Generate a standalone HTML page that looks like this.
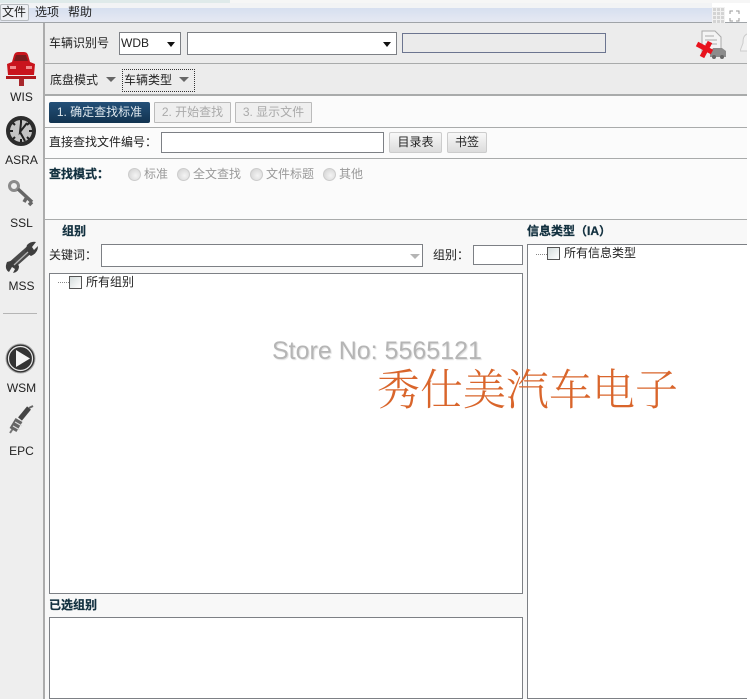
<!DOCTYPE html>
<html lang="zh">
<head>
<meta charset="utf-8">
<style>
html,body{margin:0;padding:0;background:#fff}
#p{position:relative;width:750px;height:699px;overflow:hidden;background:#fff;font-family:"Liberation Sans","Noto Sans CJK SC",sans-serif;font-size:12px;color:#222}
#p div,#p span.a,#p svg{position:absolute}
.t{position:absolute;white-space:nowrap;line-height:14px}
.b{font-weight:bold;color:#12303f;-webkit-text-stroke:.25px #12303f}
.box{background:#fff;border:1px solid #7d8085;box-sizing:border-box}
.l{background:#a9abab;height:1px;left:45px;width:702px}
.btn{box-sizing:border-box;text-align:center;border:1px solid #bbb;background:#efefef;color:#aaa;height:21px;line-height:19px;border-radius:1px}
.btn2{box-sizing:border-box;text-align:center;border:1px solid #ccc;background:linear-gradient(#f8f8f8,#dcdcdc);color:#222;height:21px;line-height:19px;border-radius:2px}
.r{width:11px;height:11px;border-radius:50%;background:radial-gradient(circle at 60% 60%,#f4f4f4,#cfcfcf);border:1px solid #ccc}
.g{color:#999}
.side{font-size:12px;color:#222;text-align:center;width:43px;left:0}
.arrow{width:0;height:0;border-left:4px solid transparent;border-right:4px solid transparent;border-top:5px solid #111}
.arrow2{width:0;height:0;border-left:5px solid transparent;border-right:5px solid transparent;border-top:5px solid #666}
.cb{box-sizing:border-box;width:13px;height:13px;border:1px solid #555;background:linear-gradient(135deg,#d5dcdc,#fff)}
.dots{height:1px;border-top:1px dotted #888}
</style>
</head>
<body>
<div id="p">
  <!-- top bars -->
  <div style="left:0;top:0;width:750px;height:3px;background:#f6f6f6"></div>
  <div style="left:0;top:0;width:230px;height:3px;background:#dfeaea"></div>
  <div style="left:0;top:3px;width:712px;height:5px;background:#f2f3f5"></div>
  <div style="left:0;top:8px;width:712px;height:14px;background:linear-gradient(#d6dff0,#e6e9f2)"></div>
  <div style="left:0;top:22px;width:747px;height:1px;background:#a0a4a8"></div>
  <div style="left:0;top:4px;width:29px;height:17px;box-sizing:border-box;border:1px solid #b8bcc0;border-radius:2px;background:#eef0f4"></div>
  <span class="t" style="left:2px;top:5px">文件</span>
  <span class="t" style="left:35px;top:5px">选项</span>
  <span class="t" style="left:68px;top:5px">帮助</span>
  <div style="left:712px;top:7px;width:13px;height:17px;background-color:#d4d4d4;background-image:linear-gradient(#f2f2f2 1px,transparent 1px),linear-gradient(90deg,#f2f2f2 1px,transparent 1px);background-size:4px 4px"></div>
  <svg style="left:729px;top:10px" width="11" height="12" viewBox="0 0 11 12" fill="none" stroke="#999"><path d="M1 4V1H4M7 1H10V4M1 8V11H4M7 11H10V8"/></svg>

  <!-- sidebar -->
  <div style="left:0;top:23px;width:43px;height:676px;background:#eeeeee"></div>
  <div style="left:43px;top:23px;width:2px;height:676px;background:#acacac"></div>

  <!-- rows -->
  <div style="left:45px;top:23px;width:702px;height:71px;background:#ececec"></div>
  <div style="left:45px;top:96px;width:702px;height:123px;background:#fbfbfb"></div>
  <div class="l" style="top:63px"></div>
  <div class="l" style="top:94px;height:2px"></div>
  <div class="l" style="top:127px"></div>
  <div class="l" style="top:158px"></div>
  <div class="l" style="top:219px"></div>
  <div style="left:45px;top:220px;width:702px;height:479px;background:#f8f8f8"></div>

  <!-- row 1 -->
  <span class="t" style="left:49px;top:36px">车辆识别号</span>
  <div class="box" style="left:119px;top:32px;width:62px;height:23px"></div>
  <span class="t" style="left:121px;top:36px">WDB</span>
  <div class="arrow" style="left:167px;top:42px"></div>
  <div class="box" style="left:187px;top:32px;width:210px;height:23px"></div>
  <div class="arrow" style="left:383px;top:42px"></div>
  <div style="left:402px;top:33px;width:204px;height:20px;box-sizing:border-box;border:1px solid #6c7590;background:#ebebeb"></div>
  <svg style="left:695px;top:28px" width="34" height="32" viewBox="0 0 34 32">
    <path d="M7 3H20L26 9V24H7Z" fill="#f4f4f4" stroke="#aaa"/>
    <path d="M10 8H19M10 12H22M10 16H22" stroke="#aaa"/>
    <path d="M15 25L18 20H27L31 23V29H15Z" fill="#8c8c8c"/>
    <circle cx="19" cy="29" r="2" fill="#666"/><circle cx="27" cy="29" r="2" fill="#666"/>
    <path d="M2 16L17 24M15 14L7 29" stroke="#e8121d" stroke-width="5"/>
  </svg>
  <svg style="left:740px;top:32px" width="7" height="24" viewBox="0 0 7 24"><path d="M7 2C3 4 3 8 3 11L0 19H7" fill="#f2f2f2" stroke="#ccc"/></svg>

  <!-- row 2 -->
  <span class="t" style="left:50px;top:73px">底盘模式</span>
  <div class="arrow2" style="left:106px;top:77px"></div>
  <div style="left:122px;top:69px;width:73px;height:23px;box-sizing:border-box;border:1px dotted #333"></div>
  <span class="t" style="left:124px;top:73px">车辆类型</span>
  <div class="arrow2" style="left:179px;top:77px"></div>

  <!-- row 3 -->
  <div style="left:49px;top:102px;width:101px;height:21px;box-sizing:border-box;border-radius:2px;background:linear-gradient(#235078,#123350);color:#dfe8ee;text-align:center;line-height:20px">1. 确定查找标准</div>
  <div class="btn" style="left:154px;top:102px;width:77px">2. 开始查找</div>
  <div class="btn" style="left:235px;top:102px;width:77px">3. 显示文件</div>

  <!-- row 4 -->
  <span class="t" style="left:49px;top:135px">直接查找文件编号：</span>
  <div class="box" style="left:161px;top:132px;width:223px;height:21px"></div>
  <div class="btn2" style="left:389px;top:132px;width:53px">目录表</div>
  <div class="btn2" style="left:447px;top:132px;width:40px">书签</div>

  <!-- row 5 -->
  <span class="t b" style="left:49px;top:167px">查找模式：</span>
  <div class="r" style="left:128px;top:168px"></div><span class="t g" style="left:144px;top:167px">标准</span>
  <div class="r" style="left:177px;top:168px"></div><span class="t g" style="left:193px;top:167px">全文查找</span>
  <div class="r" style="left:250px;top:168px"></div><span class="t g" style="left:266px;top:167px">文件标题</span>
  <div class="r" style="left:323px;top:168px"></div><span class="t g" style="left:339px;top:167px">其他</span>

  <!-- group panel -->
  <span class="t b" style="left:62px;top:224px">组别</span>
  <span class="t" style="left:49px;top:248px">关键词：</span>
  <div class="box" style="left:101px;top:244px;width:322px;height:23px"></div>
  <div class="arrow2" style="left:410px;top:254px;border-top-color:#b5b5b5"></div>
  <span class="t" style="left:433px;top:248px">组别：</span>
  <div class="box" style="left:473px;top:245px;width:50px;height:20px"></div>
  <div class="box" style="left:49px;top:273px;width:474px;height:321px"></div>
  <div class="dots" style="left:58px;top:282px;width:11px"></div>
  <div class="cb" style="left:69px;top:276px"></div>
  <span class="t" style="left:86px;top:275px">所有组别</span>

  <span class="t b" style="left:49px;top:598px">已选组别</span>
  <div class="box" style="left:49px;top:617px;width:474px;height:82px"></div>

  <!-- info type -->
  <span class="t b" style="left:527px;top:224px">信息类型（IA）</span>
  <div class="box" style="left:527px;top:244px;width:220px;height:455px;border-right:none"></div>
  <div class="dots" style="left:536px;top:254px;width:11px"></div>
  <div class="cb" style="left:547px;top:247px"></div>
  <span class="t" style="left:564px;top:246px">所有信息类型</span>

  <!-- sidebar icons -->
  <svg style="left:6px;top:50px" width="30" height="36" viewBox="0 0 30 36">
    <path d="M6 12L8 5Q9 2 12 2H18Q21 2 22 5L24 12L29 14L28 25H2L1 14Z" fill="#c9141c"/>
    <path d="M8 11L10 5H20L22 11Z" fill="#7a1a1c"/>
    <path d="M4 16H10V19H4ZM20 16H26V19H20Z" fill="#f08a8a"/>
    <rect x="0" y="26" width="30" height="3" fill="#b01a1e"/>
    <rect x="13" y="29" width="5" height="7" fill="#a8282c"/>
  </svg>
  <span class="t side" style="top:90px">WIS</span>

  <svg style="left:6px;top:116px" width="31" height="31" viewBox="0 0 31 31">
    <circle cx="15" cy="15" r="13" fill="#c4c4c4" stroke="#2c2c2c" stroke-width="4"/>
    <path d="M15 4V7M15 23V26M4 15H7M23 15H26M7 7L9 9M21 21L23 23M23 7L21 9M9 21L7 23" stroke="#222" stroke-width="2"/>
    <path d="M15 7L14 16L21 7M14 16L19 25" stroke="#222" stroke-width="2" fill="none"/>
  </svg>
  <span class="t side" style="top:153px">ASRA</span>

  <svg style="left:7px;top:179px" width="28" height="28" viewBox="0 0 28 28" fill="none">
    <circle cx="7" cy="7" r="4.5" stroke="#8a8a8a" stroke-width="3"/>
    <path d="M11 10L25 23M20 18L17 23M25 23L22 26" stroke="#666" stroke-width="3.5"/>
  </svg>
  <span class="t side" style="top:216px">SSL</span>

  <svg style="left:4px;top:240px" width="34" height="34" viewBox="0 0 34 34" fill="none">
    <path d="M8 25L25 10" stroke="#4a4a4a" stroke-width="8"/>
    <path d="M10 20L3 22Q0 29 5 32L8 27L11 29L9 33Q15 32 15 26Z" fill="#3e3e3e"/>
    <path d="M21 12L23 5Q27 1 32 2L28 7L30 10L34 6Q34 13 27 16Z" fill="#3e3e3e"/>
    <path d="M10 25L24 12" stroke="#b5b5b5" stroke-width="1.3"/>
  </svg>
  <span class="t side" style="top:279px">MSS</span>

  <div style="left:3px;top:313px;width:34px;height:1px;background:#b5b5b5"></div>

  <svg style="left:5px;top:343px" width="31" height="31" viewBox="0 0 31 31">
    <circle cx="15.5" cy="15.5" r="14.5" fill="#333" stroke="#aaa" stroke-width="1"/>
    <circle cx="15.5" cy="15.5" r="12" fill="#333" stroke="#e8e8e8" stroke-width="1.2"/>
    <path d="M11 7L25 15.5L11 24Z" fill="#f4f4f4"/>
  </svg>
  <span class="t side" style="top:381px">WSM</span>

  <svg style="left:7px;top:404px" width="28" height="34" viewBox="0 0 28 34" fill="none">
    <path d="M3 29L7 23" stroke="#777" stroke-width="2"/>
    <path d="M6 26L12 16" stroke="#666" stroke-width="8"/>
    <path d="M6 22L13 26M8 18L15 22" stroke="#ddd" stroke-width="1.2"/>
    <path d="M13 15L22 4" stroke="#444" stroke-width="5"/>
    <path d="M22 4L26 2" stroke="#666" stroke-width="2"/>
  </svg>
  <span class="t side" style="top:444px">EPC</span>

  <!-- watermarks -->
  <span class="t" style="left:272px;top:337px;font-size:25px;line-height:28px;color:#b5b5b5;text-shadow:1px 1px 1px #ddd">Store No: 5565121</span>
  <span class="t" style="left:377px;top:369px;font-size:43px;line-height:46px;color:#d9652b;font-family:'Liberation Serif','Noto Serif CJK SC',serif;font-weight:300">秀仕美汽车电子</span>
</div>
</body>
</html>
